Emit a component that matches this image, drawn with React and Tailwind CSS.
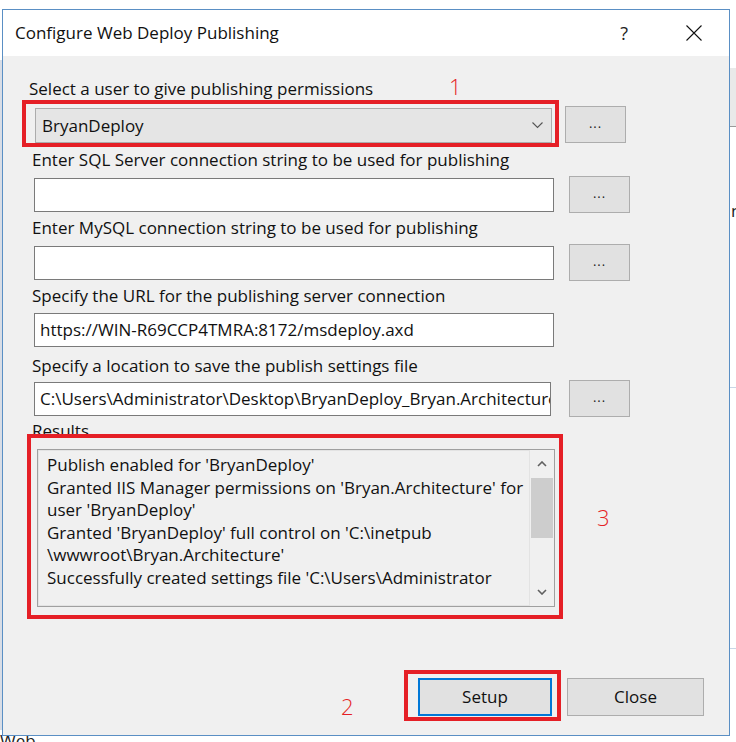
import React from 'react';

const font = { fontFamily: '"Open Sans", "Noto Sans", sans-serif' };

const DotsButton = ({ className = '' }) => (
  <div
    className={`h-[37px] w-[61px] shrink-0 border border-[#adadad] bg-[#e1e1e1] flex items-center justify-center text-[13px] text-[#222] ${className}`}
  >
    <span className="-mt-[2px] tracking-[1px]">...</span>
  </div>
);

const TextInput = ({ value = '', className = '' }) => (
  <div
    className={`h-[34px] shrink-0 border border-[#7a7a7a] bg-white flex items-center pl-[5px] overflow-hidden ${className}`}
  >
    <span className="whitespace-nowrap text-[17px] text-[#111]">{value}</span>
  </div>
);

const Label = ({ children, className = '' }) => (
  <div className={`h-[20px] leading-[20px] text-[17px] text-[#111] whitespace-nowrap ${className}`}>{children}</div>
);

const results = [
  "Publish enabled for 'BryanDeploy'",
  "Granted IIS Manager permissions on 'Bryan.Architecture' for",
  "user 'BryanDeploy'",
  "Granted 'BryanDeploy' full control on 'C:\\inetpub",
  "\\wwwroot\\Bryan.Architecture'",
  "Successfully created settings file 'C:\\Users\\Administrator",
];

export default function App() {
  return (
    <div className="relative w-[736px] h-[742px] bg-white overflow-hidden" style={font}>
      {/* bits of the window behind */}
      <div className="absolute left-[730px] top-[68px] w-[6px] h-[59px] bg-[#e9e9e9] border-b border-[#9a9a9a]" />
      <div className="absolute left-[731px] top-[201px] text-[17px] text-[#222] leading-[20px]">n</div>
      <div className="absolute left-[730px] top-[387px] w-[6px] h-px bg-[#c9d6e6]" />
      <div className="absolute left-[730px] top-[648px] w-[6px] h-px bg-[#c9d6e6]" />
      <div className="absolute left-0 top-[731px] text-[17px] text-[#222] leading-[20px]">Web</div>
      <div className="absolute left-0 top-[60px] w-[2px] h-[670px] bg-[#d8dde6]" />

      <div className="pt-[9px] pl-[2px]">
        <div className="relative w-[728px] h-[727px] border border-[#5a8fc4] bg-[#f0f0f0] flex flex-col">
          {/* title bar */}
          <div className="h-[46px] bg-white flex items-center shrink-0">
            <div className="ml-[12px] text-[17px] text-[#111] leading-[22px]">Configure Web Deploy Publishing</div>
            <div className="ml-auto mr-[58px] text-[18px] text-[#222] leading-[22px]">?</div>
            <svg className="mr-[27px]" width="16" height="16" viewBox="0 0 16 16">
              <path d="M0.5 0.5 L15.5 15.5 M15.5 0.5 L0.5 15.5" stroke="#111" strokeWidth="1.1" fill="none" />
            </svg>
          </div>

          {/* body */}
          <div className="relative flex-1 flex flex-col">
            <Label className="mt-[23px] ml-[26px]">Select a user to give publishing permissions</Label>
            <div className="flex mt-[7px]">
              <div className="mt-[2px] ml-[32px] h-[35px] w-[517px] border border-[#acacac] bg-[#e5e5e5] flex items-center pl-[6px] pr-[8px] text-[17px] text-[#111]">
                BryanDeploy
                <svg className="ml-auto" width="11" height="7" viewBox="0 0 11 7">
                  <path d="M0.5 0.5 L5.5 5.5 L10.5 0.5" stroke="#555" strokeWidth="1.1" fill="none" />
                </svg>
              </div>
              <DotsButton className="ml-[13px] w-[60px]" />
            </div>

            <Label className="mt-[7px] ml-[29px]">Enter SQL Server connection string to be used for publishing</Label>
            <div className="flex mt-[6px] items-center">
              <TextInput className="ml-[31px] w-[520px]" />
              <DotsButton className="ml-[15px]" />
            </div>

            <Label className="mt-[5px] ml-[29px]">Enter MySQL connection string to be used for publishing</Label>
            <div className="flex mt-[6px] items-center">
              <TextInput className="ml-[31px] w-[520px]" />
              <DotsButton className="ml-[15px]" />
            </div>

            <Label className="mt-[5px] ml-[29px]">Specify the URL for the publishing server connection</Label>
            <TextInput className="mt-[7px] ml-[31px] w-[520px]" value="https://WIN-R69CCP4TMRA:8172/msdeploy.axd" />

            <Label className="mt-[9px] ml-[29px]">Specify a location to save the publish settings file</Label>
            <div className="flex mt-[4px] items-center">
              <TextInput
                className="ml-[31px] w-[517px]"
                value="C:\Users\Administrator\Desktop\BryanDeploy_Bryan.Architecture"
              />
              <DotsButton className="ml-[18px] h-[36px]" />
            </div>

            <Label className="mt-[4px] ml-[29px]">Results</Label>
            <div className="mt-[8px] ml-[34px] w-[518px] h-[158px] border border-[#a0a0a0] flex">
              <div className="flex-1 border border-[#e3e3e3] pl-[8px] pt-[3px] text-[17px] leading-[22.6px] text-[#111] whitespace-nowrap overflow-hidden">
                {results.map((line) => (
                  <div key={line}>{line}</div>
                ))}
              </div>
              <div className="w-[23px] flex flex-col items-center bg-[#f0f0f0] my-[1px] mr-[1px]">
                <svg className="mt-[10px]" width="10" height="6" viewBox="0 0 10 6">
                  <path d="M1 5 L5 1 L9 5" stroke="#606060" strokeWidth="1.6" fill="none" />
                </svg>
                <div className="mt-[11px] w-[22px] h-[60px] bg-[#cdcdcd]" />
                <svg className="mt-auto mb-[10px]" width="10" height="6" viewBox="0 0 10 6">
                  <path d="M1 1 L5 5 L9 1" stroke="#606060" strokeWidth="1.6" fill="none" />
                </svg>
              </div>
            </div>

            <div className="flex mt-[71px]">
              <div className="ml-[415px] w-[134px] h-[38px] border-2 border-[#0078d7] bg-[#e1e1e1] flex items-center justify-center text-[17px] text-[#111]">
                Setup
              </div>
              <div className="ml-[15px] w-[137px] h-[38px] border border-[#adadad] bg-[#e1e1e1] flex items-center justify-center text-[17px] text-[#111]">
                Close
              </div>
            </div>

            {/* annotations */}
            <div className="absolute left-[19px] top-[44px] w-[537px] h-[47px] border-4 border-[#e51f26]" />
            <div className="absolute left-[24px] top-[378px] w-[536px] h-[185px] border-4 border-[#e51f26]" />
            <div className="absolute left-[401px] top-[614px] w-[157px] h-[51px] border-4 border-[#e51f26]" />
            <div className="absolute left-[446px] top-[16px] text-[22px] leading-[28px] text-[#e51f26] font-light">1</div>
            <div className="absolute left-[594px] top-[447px] text-[22px] leading-[28px] text-[#e51f26] font-light">3</div>
            <div className="absolute left-[338px] top-[636px] text-[22px] leading-[28px] text-[#e51f26] font-light">2</div>
          </div>
        </div>
      </div>
    </div>
  );
}
